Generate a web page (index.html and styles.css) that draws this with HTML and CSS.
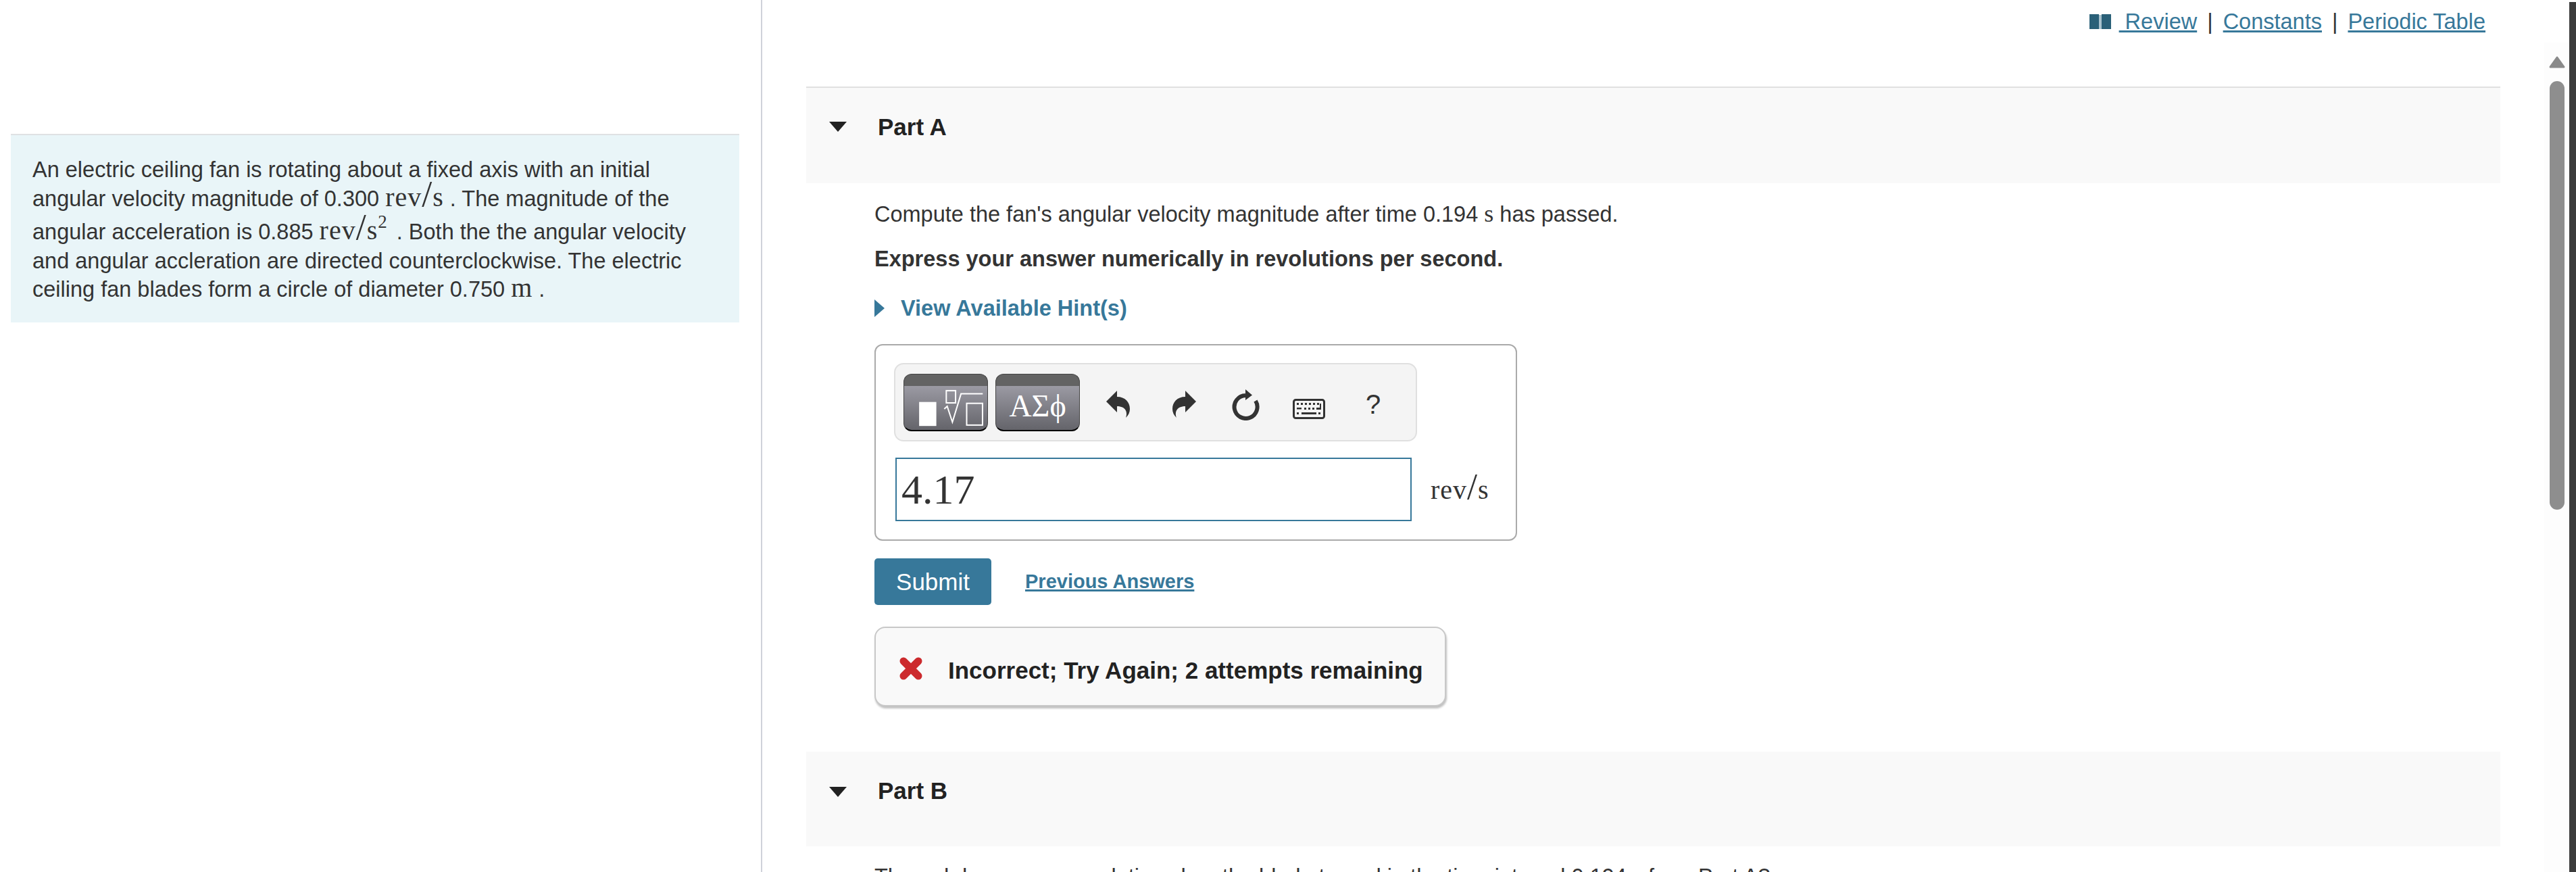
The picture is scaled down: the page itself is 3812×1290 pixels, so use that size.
FILE: index.html
```html
<!DOCTYPE html>
<html lang="en">
<head>
<meta charset="utf-8">
<title>Part A</title>
<link rel="stylesheet" href="styles.css">
</head>
<body>
<div class="app">
  <aside class="left">
    <div class="problem">An electric ceiling fan is rotating about a fixed axis with an initial angular velocity magnitude of 0.300 <span class="math">rev<span class="slash">/</span>s</span> . The magnitude of the angular acceleration is 0.885 <span class="math">rev<span class="slash">/</span>s<span class="sup">2</span></span> . Both the the angular velocity and angular accleration are directed counterclockwise. The electric ceiling fan blades form a circle of diameter 0.750 <span class="math">m</span> .</div>
  </aside>
  <main class="content">
    <nav class="toplinks">
      <svg class="book" viewBox="0 0 32 24"><rect x="0" y="1" width="14" height="22" fill="#2a6078"/><rect x="18" y="1" width="14" height="22" fill="#2a6078"/><rect x="14" y="2" width="4" height="21" fill="#a9c2ce"/></svg>
      <a class="link review" href="#">&nbsp;Review</a><span class="sep">|</span><a class="link" href="#">Constants</a><span class="sep">|</span><a class="link" href="#">Periodic Table</a>
    </nav>
    <header class="part-head part-first"><span class="caret"></span><h2 class="part-title">Part A</h2></header>
    <section class="part-body">
      <p class="para para-first">Compute the fan's angular velocity magnitude after time 0.194 <span class="math math-small">s</span> has passed.</p>
      <p class="para para-strong">Express your answer numerically in revolutions per second.</p>
      <div class="hint"><span class="hint-caret"></span><span>View Available Hint(s)</span></div>
      <div class="answer">
        <div class="toolbar">
          <div class="tpl-btn">
            <svg class="tpl-svg" viewBox="52 37 373 253"><rect x="121" y="161" width="76" height="106" fill="#fff"/><rect x="241" y="111" width="41" height="54" fill="none" stroke="#fff" stroke-width="6"/><path d="M232 192 L245 180 L268 250 L306 125 H402" fill="none" stroke="#fff" stroke-width="6"/><rect x="331" y="167" width="70" height="96" fill="none" stroke="#fff" stroke-width="6"/></svg>
          </div>
          <div class="tpl-btn tpl-text">ΑΣϕ</div>
          <svg class="ico undo" viewBox="0 0 35 40"><path d="M0 16 L16 0 V9 C28 9 35 17 35 27 C35 32 33 36 29 40 C32 32 29 23 16 23 V32 Z" fill="#333"/></svg>
          <svg class="ico redo" viewBox="0 0 35 40"><path d="M35 16 L19 0 V9 C7 9 0 17 0 27 C0 32 2 36 6 40 C3 32 6 23 19 23 V32 Z" fill="#333"/></svg>
          <svg class="ico reload" viewBox="0 0 41 46"><path d="M20 9 A17 17 0 1 0 35 17" fill="none" stroke="#333" stroke-width="6"/><path d="M20 0 L30 8.500 L20 16 Z" fill="#333"/></svg>
          <svg class="ico keyboard" viewBox="0 0 48 30"><rect x="1.500" y="1.500" width="45" height="27" rx="3" fill="#f4f4f4" stroke="#333" stroke-width="3"/><path d="M6 6h3v3H6zM12 6h3v3h-3zM18 6h3v3h-3zM24 6h3v3h-3zM30 6h3v3h-3zM36 6h3v3h-3zM6 13h7v2.500H6zM17 13h3v3h-3zM23 13h3v3h-3zM29 13h3v3h-3zM35 13h5V7h2v9h-7zM6 20h3v3H6zM13 20h22v3H13zM38 20h3v3h-3z" fill="#333"/></svg>
          <span class="help">?</span>
        </div>
        <div class="input-row">
          <input class="answer-input" type="text" value="4.17" aria-label="Answer">
          <span class="math unit">rev<span class="slash">/</span>s</span>
        </div>
      </div>
      <div class="actions"><button class="submit" type="button">Submit</button><a class="prev" href="#">Previous Answers</a></div>
      <div class="feedback">
        <svg class="x-ico" viewBox="0 0 34 34"><path d="M6 6 L28 28 M28 6 L6 28" fill="none" stroke="#cc2a2d" stroke-width="11" stroke-linecap="round"/></svg>
        <span class="feedback-text">Incorrect; Try Again; 2 attempts remaining</span>
      </div>
    </section>
    <header class="part-head part-second"><span class="caret"></span><h2 class="part-title">Part B</h2></header>
    <section class="part-body">
      <p class="para para-first-b">Through how many revolutions has the blade turned in the time interval 0.194 <span class="math math-small">s</span> from Part A?</p>
    </section>
  </main>
  <div class="scrollbar">
    <div class="track">
      <svg class="sb-arrow" viewBox="0 0 24 18"><path d="M12 2 L22 16 H2 Z" fill="#8a8a8a" stroke="#8a8a8a" stroke-width="3" stroke-linejoin="round"/></svg>
      <div class="thumb"></div>
    </div>
    <div class="edge"></div>
  </div>
</div>
</body>
</html>
```
FILE: styles.css
```css
* { box-sizing: border-box; }
html, body { margin: 0; padding: 0; background: #fff; }
body { font-family: "Liberation Sans", Arial, sans-serif; font-size: 32.500px; color: #333; }
.app { display: flex; width: 3812px; height: 1290px; overflow: hidden; }

.left { width: 1128px; flex: none; border-right: 2px solid #cfd2da; padding: 198px 32px 0 16px; }
.problem { height: 279px; background: #e9f5f8; border-top: 2px solid #dfe1e3; padding: 30px 54px 0 32px; line-height: 42.500px; }

.math { font-family: "Liberation Serif", "Times New Roman", serif; font-size: 40px; letter-spacing: 1px; line-height: 0; }
.math-small { font-size: 36px; letter-spacing: 0; }
.slash { font-size: 54px; font-weight: 400; line-height: 0; }
.sup { display: inline-block; margin-right: 5px; font-size: 27px; line-height: 1; vertical-align: 17px; letter-spacing: 0; }

.content { flex: none; width: 2637px; padding: 0 65px; }
.toplinks { height: 128px; display: flex; justify-content: flex-end; align-items: flex-start; padding: 12px 22px 0 0; line-height: 40px; }
.book { width: 32px; height: 24px; margin: 8px 12px 0 0; }
.link { color: #37789a; text-decoration: underline; text-decoration-thickness: 3px; white-space: pre; }
.sep { margin: 0 15px; color: #333; }

.part-head { display: flex; align-items: flex-start; background: #f9f9f9; padding: 38px 0 0 34px; }
.part-first { height: 143px; border-top: 2px solid #e0e0e0; }
.part-second { height: 140px; margin-top: 67px; }
.caret { width: 0; height: 0; margin-top: 14px; border-left: 13.500px solid transparent; border-right: 13.500px solid transparent; border-top: 15px solid #222; }
.part-first .caret { margin-top: 12px; }
.part-title { margin: 0 0 0 46px; font-size: 35px; font-weight: 700; line-height: 40px; color: #222; }

.part-body { padding-left: 101px; }
.para { margin: 0; line-height: 40px; }
.para-first { margin-top: 26px; }
.para-strong { margin-top: 26px; font-weight: 700; }
.para-first-b { margin-top: 25px; white-space: nowrap; }

.hint { margin-top: 33px; display: flex; align-items: center; font-weight: 700; line-height: 40px; color: #37789a; }
.hint-caret { width: 0; height: 0; margin-right: 24px; border-top: 13px solid transparent; border-bottom: 13px solid transparent; border-left: 15px solid #37789a; }

.answer { width: 951px; height: 291px; margin-top: 33px; border: 2px solid #aaa; border-radius: 12px; padding: 26px 27px 0; }
.toolbar { width: 774px; height: 116px; display: flex; align-items: center; background: #f4f4f4; border: 2px solid #e0e0e0; border-radius: 14px; padding: 0 0 0 12px; }
.tpl-btn { width: 125px; height: 85px; flex: none; margin-right: 11px; border-radius: 12px; border: 1px solid #444; border-bottom: 2px solid #000; background: linear-gradient(#636363 0, #636363 17px, #9b9aa3 17px, #64646a 100%); overflow: hidden; }
.tpl-svg { display: block; width: 125px; height: 85px; margin: -1px; }
.tpl-text { font-family: "Liberation Serif", "Times New Roman", serif; font-size: 46px; line-height: 82px; padding-top: 6px; text-align: center; color: #fff; }
.ico { flex: none; display: block; }
.undo { width: 35px; height: 40px; margin: 6px 0 0 28px; }
.redo { width: 35px; height: 40px; margin: 6px 0 0 63px; }
.reload { width: 41px; height: 46px; margin: 8px 0 0 53px; }
.keyboard { width: 48px; height: 30px; margin: 20px 0 0 49px; }
.help { margin: 6px 0 0 60px; font-size: 40px; line-height: 40px; color: #333; }

.input-row { display: flex; align-items: center; margin: 24px 0 0 2px; }
.answer-input { width: 764px; height: 94px; flex: none; margin: 0; padding: 0 0 0 7px; border: 2px solid #37789a; border-radius: 0; outline: none; background: #fff; font-family: "Liberation Serif", "Times New Roman", serif; font-size: 62px; color: #333; }
.unit { margin: 0 0 0 28px; line-height: 40px; padding-top: 2px; }

.actions { display: flex; align-items: center; margin-top: 26px; }
.submit { width: 173px; height: 69px; padding: 0; border: 0; border-radius: 5px; background: #37789a; color: #fff; font-family: "Liberation Sans", Arial, sans-serif; font-size: 35px; }
.prev { margin-left: 50px; font-size: 29px; font-weight: 700; color: #37789a; text-decoration: underline; text-decoration-thickness: 3px; }

.feedback { width: 846px; height: 118px; margin-top: 32px; display: flex; align-items: center; background: #f9f9f9; border: 2px solid #c8c8c8; border-radius: 16px; padding: 12px 0 0 35px; box-shadow: 1px 3px 3px #c0c0c0; }
.x-ico { width: 34px; height: 34px; flex: none; margin: -6px 38px 0 0; }
.feedback-text { font-size: 35px; font-weight: 700; line-height: 40px; color: #222; white-space: nowrap; }

.scrollbar { flex: none; width: 47px; display: flex; }
.track { width: 37px; margin-top: 63px; padding: 20px 7px 0 8px; background: #fdfdfd; }
.sb-arrow { display: block; width: 24px; height: 18px; margin-left: -1px; }
.thumb { width: 22px; height: 634px; margin-top: 19px; border-radius: 11px; background: #8e8e8e; }
.edge { width: 10px; margin-top: 3px; background: #3c3c3c; }
```
